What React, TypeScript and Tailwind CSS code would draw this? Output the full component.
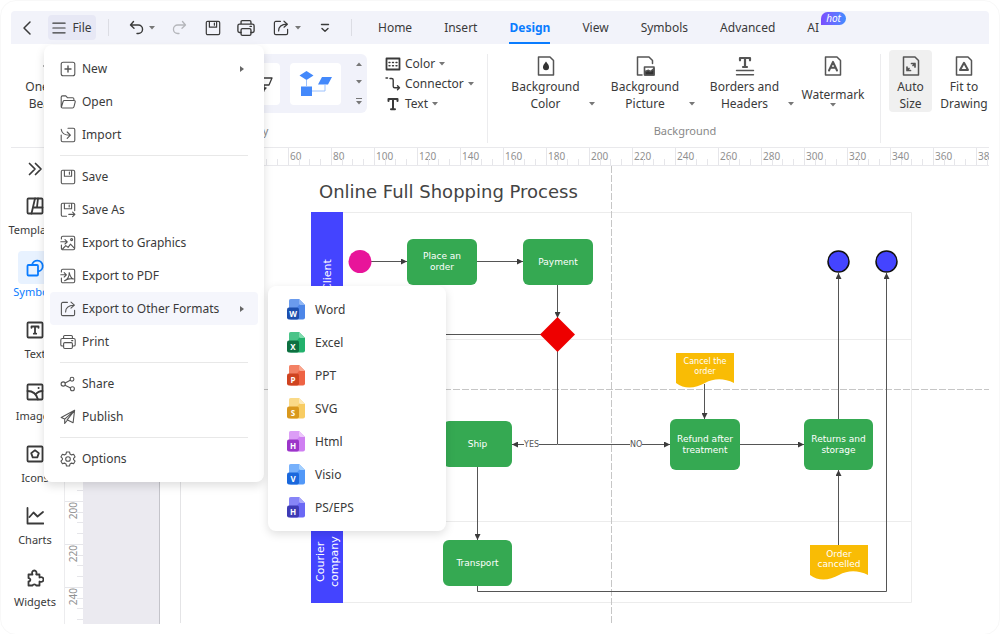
import React from "react";
import clsx from "clsx";

type IconProps = { children: React.ReactNode; className?: string; box?: number; stroke?: number };

const Icon: React.FC<IconProps> = ({ children, className = "size-4", box = 16, stroke = 1.1 }) => (
  <svg
    viewBox={`0 0 ${box} ${box}`}
    className={clsx("shrink-0", className)}
    fill="none"
    stroke="currentColor"
    strokeWidth={stroke}
    strokeLinecap="round"
    strokeLinejoin="round"
    aria-hidden="true"
  >
    {children}
  </svg>
);

const Caret: React.FC<{ className?: string }> = ({ className }) => (
  <svg viewBox="0 0 6 4" className={clsx("h-1 w-1.5 shrink-0 fill-[#777]", className)} aria-hidden="true">
    <path d="M0 0h6L3 3.6z" />
  </svg>
);

const shapes = {
  plus: (
    <>
      <rect x="1.2" y="1.2" width="13.6" height="13.6" rx="2" />
      <path d="M8 5v6M5 8h6" strokeWidth="1.4" />
    </>
  ),
  folder: (
    <path d="M1.2 12.8V3.2c0-.8.5-1.3 1.3-1.3h3.3l1.6 1.8h5.2c.8 0 1.3.5 1.3 1.3v1.4M1.4 13.2l1.7-5.7c.2-.7.6-1 1.3-1h9.7c.8 0 1.3.6 1.1 1.4l-1.2 4.8c-.2.8-.7 1.3-1.5 1.3h-10c-.8 0-1.3-.6-1.1-.8z" />
  ),
  importing: (
    <>
      <path d="M8 1.2h5.3c.9 0 1.5.6 1.5 1.5v10.6c0 .9-.6 1.5-1.5 1.5H2.7c-.9 0-1.5-.6-1.5-1.5V8" />
      <path d="M1.2 2.2c.5 3.8 2.6 6 8.6 6M7.2 5l3.2 3.2-3.2 3.2" />
    </>
  ),
  save: (
    <>
      <path d="M1.3 2.7c0-.8.6-1.4 1.4-1.4h10.6c.8 0 1.4.6 1.4 1.4v10.6c0 .8-.6 1.4-1.4 1.4H2.7c-.8 0-1.4-.6-1.4-1.4z" />
      <path d="M4.4 1.5v5.7h7.2V1.5M9.4 3v2.2" />
    </>
  ),
  saveAs: (
    <>
      <path d="M6.5 14.2H2.7c-.8 0-1.4-.6-1.4-1.4V2.6c0-.8.6-1.4 1.4-1.4h10.6c.8 0 1.4.6 1.4 1.4v6" />
      <path d="M4.4 1.5v5.3h7.2V1.5M9.2 3v2M8.8 12.4h6M12.6 10.2l2.3 2.2-2.3 2.3" />
    </>
  ),
  graphics: (
    <>
      <path d="M1.4 4V2.7c0-.8.6-1.4 1.4-1.4h10.5c.8 0 1.4.6 1.4 1.4v10.6c0 .8-.6 1.4-1.4 1.4H2.8c-.8 0-1.4-.6-1.4-1.4V10" />
      <path d="M.8 6.8h6.4M5 4.6l2.3 2.2L5 9M2.6 14l3.2-3.4 2.3 1.8 2.4-3.2 4 4.2" />
      <circle cx="11.6" cy="4.6" r="1" />
    </>
  ),
  pdf: (
    <>
      <path d="M1.4 4V2.7c0-.8.6-1.4 1.4-1.4h10.5c.8 0 1.4.6 1.4 1.4v10.6c0 .8-.6 1.4-1.4 1.4H2.8c-.8 0-1.4-.6-1.4-1.4V10" />
      <path d="M.8 6.8h5.4M4.2 4.6l2.2 2.2L4.2 9M4.6 12.8C8 11 9.4 7.8 9.2 4.6c1 4 2.4 6 4.4 6.4-2.6-.7-6-.2-9 1.8z" />
    </>
  ),
  share: (
    <>
      <path d="M7.4 1.4H2.8c-.8 0-1.4.6-1.4 1.4v10.4c0 .8.6 1.4 1.4 1.4h10.4c.8 0 1.4-.6 1.4-1.4V9.4" />
      <path d="M5.6 11c0-4 2.6-6.6 8.4-6.8M11 1.2l3.4 3-3.4 3" />
    </>
  ),
  printer: (
    <>
      <path d="M3.6 4.4V2.6c0-.7.4-1.1 1.1-1.1h6.6c.7 0 1.1.4 1.1 1.1v1.8M3.6 12H2.2C1.4 12 .8 11.5.8 10.7V6c0-.9.6-1.5 1.5-1.5h11.4c.9 0 1.5.6 1.5 1.5v4.7c0 .8-.6 1.3-1.4 1.3h-1.4" />
      <rect x="3.6" y="8.6" width="8.8" height="5.9" rx="1.2" />
      <path d="M11.6 6.6h1.2" />
    </>
  ),
  nodes: (
    <>
      <circle cx="3.2" cy="8" r="2.1" />
      <circle cx="12" cy="3.2" r="1.9" />
      <circle cx="12.4" cy="12.8" r="2" />
      <path d="M5.2 7l5-2.8M5 9.2l5.6 2.8" />
    </>
  ),
  plane: <path d="M14.6 1.3L1.2 8.4l3.5 1.7zM14.6 1.3L4.7 10.1v4.3l2.4-2.9M14.6 1.3l-1.5 12.4-6-2.9z" />,
  gear: (
    <>
      <path d="M6.5 1h3l.5 2 1.6.9 2-.6 1.5 2.6-1.5 1.4v1.4l1.5 1.4-1.5 2.6-2-.6-1.6.9-.5 2h-3l-.5-2-1.6-.9-2 .6L.9 10.1l1.5-1.4V7.3L.9 5.9l1.5-2.6 2 .6L6 3z" />
      <circle cx="8" cy="8" r="2.3" />
    </>
  ),
};

type MenuEntry = { label: string; icon: keyof typeof shapes; arrow?: boolean; active?: boolean };

const menuGroups: MenuEntry[][] = [
  [
    { label: "New", icon: "plus", arrow: true },
    { label: "Open", icon: "folder" },
    { label: "Import", icon: "importing" },
  ],
  [
    { label: "Save", icon: "save" },
    { label: "Save As", icon: "saveAs" },
    { label: "Export to Graphics", icon: "graphics" },
    { label: "Export to PDF", icon: "pdf" },
    { label: "Export to Other Formats", icon: "share", arrow: true, active: true },
    { label: "Print", icon: "printer" },
  ],
  [
    { label: "Share", icon: "nodes" },
    { label: "Publish", icon: "plane" },
  ],
  [{ label: "Options", icon: "gear" }],
];

const formats = [
  { label: "Word", letter: "W", page: "#4d86e8", fold: "#8fb6f5", badge: "#1c4fae" },
  { label: "Excel", letter: "X", page: "#22b16c", fold: "#7fdcae", badge: "#0d7040" },
  { label: "PPT", letter: "P", page: "#ee6344", fold: "#f9a68e", badge: "#cf4320" },
  { label: "SVG", letter: "S", page: "#f8cc62", fold: "#fdeab8", badge: "#d9981d" },
  { label: "Html", letter: "H", page: "#cf7ff2", fold: "#ecc6fb", badge: "#9c35c9" },
  { label: "Visio", letter: "V", page: "#5298f8", fold: "#a3d0ff", badge: "#1a68dc" },
  { label: "PS/EPS", letter: "H", page: "#6b68f5", fold: "#aaa8fa", badge: "#3e3bb5" },
];

const FormatIcon: React.FC<(typeof formats)[number]> = ({ letter, page, fold, badge }) => (
  <svg viewBox="0 0 18 21" className="h-[21px] w-[18px] shrink-0" aria-hidden="true">
    <path d="M4 0h8l6 6v12.500a2 2 0 0 1-2 2H4a2 2 0 0 1-2-2V2a2 2 0 0 1 2-2z" fill={page} />
    <path d="M4 0h8v6l-4 5H2V2a2 2 0 0 1 2-2z" fill={fold} opacity="0.45" />
    <path d="M12 0l6 6h-4.500A1.500 1.500 0 0 1 12 4.500z" fill={fold} />
    <rect y="8.5" width="12" height="12" rx="2" fill={badge} />
    <text x="6" y="17.5" textAnchor="middle" fontSize="8" fontWeight="700" fill="#fff" className="font-['Noto_Sans',sans-serif]">
      {letter}
    </text>
  </svg>
);

const FormatMenu: React.FC = () => (
  <div
    role="menu"
    className="absolute -top-1.5 left-full ml-2.5 w-[178px] rounded-lg bg-white py-[7px] shadow-[0_3px_10px_rgba(0,0,0,0.13)]"
  >
    {formats.map((format) => (
      <button key={format.label} role="menuitem" className="flex h-[33px] w-full items-center gap-2.5 px-[19px] text-left">
        <FormatIcon {...format} />
        {format.label}
      </button>
    ))}
  </div>
);

const FileMenu: React.FC = () => (
  <div
    role="menu"
    className="absolute top-[34px] left-[33px] z-20 w-[220px] rounded-lg bg-white px-1.5 py-[7px] text-[12px] shadow-[0_4px_10px_rgba(0,0,0,0.13)]"
  >
    {menuGroups.map((group, index) => (
      <React.Fragment key={group[0].label}>
        {index > 0 && <hr className="mx-2.5 my-1 border-[#e8e8e8]" />}
        {group.map((item) => (
          <div key={item.label} className="relative">
            <button
              role="menuitem"
              className={clsx(
                "flex h-[33px] w-full items-center gap-1.5 rounded px-2.5 text-left",
                item.active && "bg-[#f5f6fc]"
              )}
            >
              <Icon className="size-4 text-[#555]">{shapes[item.icon]}</Icon>
              <span className="flex-1">{item.label}</span>
              {item.arrow && (
                <svg viewBox="0 0 4 6" className="mr-1 h-1.5 w-1 fill-[#666]" aria-hidden="true">
                  <path d="M0 0l4 3-4 3z" />
                </svg>
              )}
            </button>
            {item.active && <FormatMenu />}
          </div>
        ))}
      </React.Fragment>
    ))}
  </div>
);

const tabs = ["Home", "Insert", "Design", "View", "Symbols", "Advanced", "AI"];

const TopBar: React.FC = () => (
  <header className="flex h-[33px] items-center rounded-t bg-[#f2f3fa] pl-2 text-[12px]">
    <button aria-label="Back">
      <Icon stroke={1.5}>
        <path d="M11 2L5 8l6 6" />
      </Icon>
    </button>
    <button className="ml-[13px] flex h-[25px] w-12 items-center justify-center gap-1.5 rounded bg-[#e7e8f5]">
      <Icon className="h-4 w-3.5" stroke={1.3}>
        <path d="M1 2.500h14M1 8h14M1 13.500h14" />
      </Icon>
      File
    </button>
    <span className="ml-3 h-[17px] w-px bg-[#dcdde4]" />
    <button aria-label="Undo" className="ml-5">
      <Icon stroke={1.4}>
        <path d="M4.500 1.500L1.500 5l3.500 3.300M1.500 5h7.800a4.200 4.200 0 0 1 0 8.500H8" />
      </Icon>
    </button>
    <Caret className="ml-1" />
    <button aria-label="Redo" className="ml-4 text-[#b5b6bb]">
      <Icon stroke={1.3}>
        <path d="M11.500 1.500l3 3.500-3.500 3.300M14.500 5H6.700a4.200 4.200 0 0 0 0 8.500H8" />
      </Icon>
    </button>
    <button aria-label="Save" className="ml-[18px]">
      <Icon stroke={1.2}>{shapes.save}</Icon>
    </button>
    <button aria-label="Print" className="ml-4">
      <Icon className="size-[18px]" stroke={1.2}>{shapes.printer}</Icon>
    </button>
    <button aria-label="Share" className="ml-[18px]">
      <Icon stroke={1.2}>{shapes.share}</Icon>
    </button>
    <Caret className="ml-1.5" />
    <button aria-label="More" className="ml-4">
      <Icon stroke={1.4}>
        <path d="M4.500 4.500h7M5 8.500l3 2.800 3-2.800" />
      </Icon>
    </button>
    <span className="ml-[18px] h-[17px] w-px bg-[#dcdde4]" />
    <nav className="ml-[26px] flex h-full gap-8">
      {tabs.map((tab) => (
        <a
          key={tab}
          href="#"
          className={clsx(
            "relative flex items-center border-b-2 pt-0.5",
            tab === "Design" ? "border-[#0a7cff] font-bold text-[#0a7cff]" : "border-transparent"
          )}
        >
          {tab}
          {tab === "AI" && (
            <span className="absolute top-px left-full ml-0.5 flex h-[13px] w-[25px] items-center justify-center rounded-full rounded-bl-none bg-linear-to-r from-[#7a4dff] to-[#3f8bff] text-[10px] text-white italic">
              hot
            </span>
          )}
        </a>
      ))}
    </nav>
  </header>
);

const sheet = "M2.500 1h11.500l3.500 3.500V19h-15z";

const ribbonIcons = {
  color: (
    <>
      <path d={sheet} />
      <path d="M10 5.500c2.300 2.900 3 4.200 3 5.700a3 3 0 0 1-6 0c0-1.500.7-2.800 3-5.700z" fill="#333" stroke="none" />
    </>
  ),
  picture: (
    <>
      <path d="M7 19H2.500V1H14l3.500 3.500V7.500" />
      <rect x="9.500" y="11" width="9.500" height="8" strokeWidth="1.600" />
      <path d="M10 19v-3.500l3.500-1.200 2 1.200 3.500-3V19z" fill="#333" />
    </>
  ),
  header: (
    <>
      <path d="M5 4.300V2h10v2.300M10 2.300v8.400M8 11h4" strokeWidth="2.200" />
      <path d="M1.500 14.500h17M1.500 18.800h17" strokeWidth="1.400" />
    </>
  ),
  watermark: (
    <>
      <path d={sheet} />
      <path d="M6 14.500L10 5.800l4 8.700M7.500 11.800h5" strokeWidth="2" />
    </>
  ),
  auto: (
    <>
      <path d={sheet} />
      <path d="M10.500 7.500H14V11M9.500 14.500H6V11M14 7.500l-2 2M6 14.500l2-2" strokeWidth="1.700" />
    </>
  ),
  fit: (
    <>
      <path d={sheet} />
      <path d="M10 6.800l4 7.200H6z" strokeWidth="2" />
    </>
  ),
};

type RibbonButtonProps = { icon: keyof typeof ribbonIcons; lines: string[]; caret?: boolean; className: string };

const RibbonButton: React.FC<RibbonButtonProps> = ({ icon, lines, caret, className }) => (
  <button className={clsx("flex flex-col items-center rounded pt-1.5 leading-[17px]", className)}>
    <Icon className="size-5 text-[#555]" box={20} stroke={1.5}>
      {ribbonIcons[icon]}
    </Icon>
    <span className="mt-0.5 flex w-full items-end justify-center">
      {caret && <span className="w-1.5" />}
      <span className="flex-1">
        {lines.map((line) => (
          <span key={line} className="block whitespace-nowrap">
            {line}
          </span>
        ))}
      </span>
      {caret && <Caret className="mb-1.5" />}
    </span>
  </button>
);

const Ribbon: React.FC = () => (
  <section className="flex h-[104px] overflow-hidden border-b border-[#e9e9ec] pt-1.5 text-[12px]">
    <div className="flex w-[476px] shrink-0 flex-col">
      <div className="flex h-[73px]">
        <button className="flex w-[82px] flex-col items-center pt-1.5 leading-[17px]">
          <Icon className="size-5" box={20} stroke={1.5}>
            <path d="M2 10h16M10 2v16" />
          </Icon>
          <span className="mt-0.5">
            One-Click
            <br />
            Beautify
          </span>
        </button>
        <div className="mt-1 ml-auto flex h-[59px] w-[240px] items-center justify-end gap-2.5 rounded-md bg-[#f1f2fa]">
          <button aria-label="Default style" className="flex h-[42px] w-[51px] items-center justify-end rounded bg-white pr-1.5">
            <Icon className="size-5" box={20} stroke={1.3}>
              <path d="M1 4h17l-3 7H7M10 11v6M8 14h4l-2 2z" />
            </Icon>
          </button>
          <button aria-label="Blue style" className="flex h-[42px] w-[51px] items-center justify-center rounded bg-white">
            <svg viewBox="0 0 34 26" className="h-[26px] w-[34px] fill-[#4489fb]" aria-hidden="true">
              <path d="M7.500 0l7 4.500-7 4.500L.5 4.500zM23 6h10l-4 7.500H19zM2 15.500h11v9.500H2z" />
              <path d="M7.500 9v6.500M13 20h13v-6.500" fill="none" stroke="#9dc2fd" />
            </svg>
          </button>
          <div className="flex h-full w-4 flex-col items-center justify-between py-2">
            <Caret className="rotate-180" />
            <Caret />
            <span className="border-t border-[#777] pt-0.5">
              <Caret />
            </span>
          </div>
        </div>
        <div className="ml-[18px] flex w-[102px] flex-col pt-1">
          <button className="flex h-5 items-center gap-1">
            <Icon stroke={1.8}>
              <rect x="1.500" y="2.500" width="13" height="11" />
              <path d="M4 6.500h8M4 9.800h8" strokeWidth="1.400" strokeDasharray="1 2.500" />
            </Icon>
            Color
            <Caret />
          </button>
          <button className="flex h-5 items-center gap-1">
            <Icon stroke={1.4}>
              <path d="M1 2h1.500M5 2.500h1.700c1 0 1.500.5 1.500 1.500v6.200c0 1 .5 1.500 1.500 1.500H14M12.500 9.700l2 2-2 2" />
            </Icon>
            Connector
            <Caret />
          </button>
          <button className="flex h-5 items-center gap-1">
            <Icon stroke={2}>
              <path d="M3.500 5V3h9v2M8 3v10M6 13.300h4" />
            </Icon>
            Text
            <Caret />
          </button>
        </div>
      </div>
      <span className="pr-1 text-center text-[11px] text-[#888]">Beautify</span>
    </div>
    <div className="my-1 w-px shrink-0 bg-[#ececee]" />
    <div className="flex w-[392px] shrink-0 flex-col pl-2">
      <div className="flex h-[73px]">
        <RibbonButton icon="color" lines={["Background", "Color"]} caret className="w-[99px]" />
        <RibbonButton icon="picture" lines={["Background", "Picture"]} caret className="w-[100px]" />
        <RibbonButton icon="header" lines={["Borders and", "Headers"]} caret className="w-[99px]" />
        <button className="flex w-[78px] flex-col items-center pt-1.5">
          <Icon className="size-5 text-[#555]" box={20} stroke={1.5}>
            {ribbonIcons.watermark}
          </Icon>
          <span className="mt-2.5 leading-[17px]">Watermark</span>
          <Caret />
        </button>
      </div>
      <span className="pr-1.5 text-center text-[11px] text-[#888]">Background</span>
    </div>
    <div className="my-1 w-px shrink-0 bg-[#ececee]" />
    <div className="flex h-[62px] gap-2 pl-2">
      <RibbonButton icon="auto" lines={["Auto", "Size"]} className="w-[43px] bg-[#f0f0f0]" />
      <RibbonButton icon="fit" lines={["Fit to", "Drawing"]} className="w-12" />
    </div>
  </section>
);

const tools = [
  {
    label: "Templates",
    icon: (
      <>
        <rect x="1.500" y="1.500" width="15" height="15" rx="1" />
        <path d="M9 1.500l-3.500 15M12 1.500l-1 8.500M7 10.500h9.500" />
      </>
    ),
  },
  {
    label: "Symbols",
    icon: (
      <>
        <rect x="1.500" y="6" width="10.500" height="10.500" rx="1" />
        <path d="M6 6a5.400 5.400 0 1 1 6.500 6.300" />
      </>
    ),
  },
  {
    label: "Text",
    icon: (
      <>
        <rect x="1.500" y="1.500" width="15" height="15" rx="1" />
        <path d="M5.500 6.800V5.500h7v1.300M9 5.500v7M7.800 12.700h2.400" />
      </>
    ),
  },
  {
    label: "Images",
    icon: (
      <>
        <rect x="1.500" y="1.500" width="15" height="15" rx="1" />
        <path d="M1.500 8c5 0 9 3 10.500 8.500M9.500 11.500c2-2.500 4-3.500 7-3.500M12.500 5h.2" />
      </>
    ),
  },
  {
    label: "Icons",
    icon: (
      <>
        <rect x="1.500" y="1.500" width="15" height="15" rx="1" />
        <path d="M9 5.300l3.800 2.800-1.500 4.300H6.700L5.200 8.100z" />
      </>
    ),
  },
  { label: "Charts", icon: <path d="M1.500 1v15.500h16M3.500 10l4-4.500 4 4L17 5" /> },
  {
    label: "Widgets",
    icon: (
      <path d="M2.500 5.500h4C5.500 3 6.500 1.500 8.300 1.500S11 3 10.200 5.500h3.300v3c2.500-1 4 .2 4 2s-1.500 3-4 2v4h-3.300c-.5-1.600-3.200-1.600-3.700 0h-4v-4.200c2.200.3 2.700-3 0-3.200z" />
    ),
  },
];

const Sidebar: React.FC = () => (
  <aside className="flex w-[53px] shrink-0 flex-col text-[11px]">
    <button aria-label="Expand panel" className="flex h-[41px] items-center pl-4">
      <Icon stroke={1.7}>
        <path d="M2.500 2.500L8 8l-5.500 5.500M8.500 2.500L14 8l-5.500 5.500" />
      </Icon>
    </button>
    {tools.map(({ label, icon }) => (
      <button
        key={label}
        className={clsx("flex h-[62px] w-12 flex-col items-center", label === "Symbols" && "text-[#0a7cff]")}
      >
        <span
          className={clsx(
            "flex h-[33px] w-[34px] shrink-0 items-center justify-center rounded",
            label === "Symbols" && "bg-[#e8f2ff]"
          )}
        >
          <Icon className="size-[18px]" box={18} stroke={1.8}>
            {icon}
          </Icon>
        </span>
        <span className="leading-[15px]">{label}</span>
      </button>
    ))}
  </aside>
);

const columns = Array.from({ length: 22 }, (_, i) => i * 20 - 40);
const rows = Array.from({ length: 10 }, (_, i) => i * 20 + 60);

const TopRuler: React.FC = () => (
  <div className="flex h-[18px] overflow-hidden border-b border-[#e8e8ec] pl-[9px] text-[10px] text-[#909090]">
    {columns.map((value) => (
      <div key={value} className="relative w-[43px] shrink-0 border-l border-[#e6e6ea] pl-px leading-4">
        {value}
        <div className="absolute inset-x-0 bottom-0 grid h-1.5 grid-cols-4 divide-x divide-[#e6e6ea]">
          <i />
          <i />
          <i />
          <i />
        </div>
      </div>
    ))}
  </div>
);

const SideRuler: React.FC = () => (
  <div className="h-[458px] w-[19px] shrink-0 overflow-hidden border-l border-[#ececee] pt-[34px] text-[10px] text-[#909090]">
    {rows.map((value) => (
      <div key={value} className="relative h-[43px] border-t border-[#e6e6ea] pl-px">
        <span className="rotate-180 leading-[14px] [writing-mode:vertical-rl]">{value}</span>
        <div className="absolute inset-y-0 right-0 grid w-1.5 grid-rows-4 divide-y divide-[#e6e6ea]">
          <i />
          <i />
          <i />
          <i />
        </div>
      </div>
    ))}
  </div>
);

const steps = [
  { text: "Place an order", place: "left-[247px] top-[73px] h-[46px] w-[70px] px-2" },
  { text: "Payment", place: "left-[363px] top-[73px] h-[46px] w-[70px]" },
  { text: "Ship", place: "left-[283px] top-[255px] h-[46px] w-[69px]" },
  { text: "Transport", place: "left-[283px] top-[374px] h-[46px] w-[69px]" },
  { text: "Refund after treatment", place: "left-[510px] top-[253px] h-[51px] w-[70px]" },
  { text: "Returns and storage", place: "left-[644px] top-[253px] h-[51px] w-[69px]" },
];

const notes = [
  { lines: ["Cancel the", "order"], place: "left-[516px] top-[187px] text-[8px]" },
  { lines: ["Order", "cancelled"], place: "left-[650px] top-[379px] text-[9px]" },
];

const Diagram: React.FC = () => (
  <div className="relative flex-1 overflow-hidden font-['DejaVu_Sans',sans-serif]">
    <svg className="absolute inset-0 h-full w-full" fill="none" aria-hidden="true">
      <defs>
        <marker id="arrow" markerWidth="6" markerHeight="6" refX="6" refY="3" orient="auto" markerUnits="userSpaceOnUse">
          <path d="M0 0l6 3-6 3z" fill="#3c3c3c" />
        </marker>
      </defs>
      <path d="M20.500 0v457" stroke="#e4e4e6" />
      <path d="M151.500 46.500h600v390h-600zM183 173.500h568M183 355.500h568" stroke="#ececec" />
      <path d="M451.500 0v457" stroke="#c6c6c6" strokeDasharray="7 2" />
      <line x1="104" y1="223.500" x2="100%" y2="223.500" stroke="#c6c6c6" strokeDasharray="7 2" />
      <path d="M151 46h32v391h-32z" fill="#4444ff" />
      <g stroke="#555">
        <path d="M211 95.500h36" markerEnd="url(#arrow)" />
        <path d="M317 95.500h46" markerEnd="url(#arrow)" />
        <path d="M397.500 119v33" markerEnd="url(#arrow)" />
        <path d="M382 168.500H230M397.500 185v93" />
        <path d="M397.500 278.500H352" markerEnd="url(#arrow)" />
        <path d="M397.500 278.500H510" markerEnd="url(#arrow)" />
        <path d="M317.500 301v73" markerEnd="url(#arrow)" />
        <path d="M317.500 420v5.500h409V107" markerEnd="url(#arrow)" />
        <path d="M678.500 253V107" markerEnd="url(#arrow)" />
        <path d="M580 278.500h64" markerEnd="url(#arrow)" />
        <path d="M544.500 218v35" markerEnd="url(#arrow)" />
        <path d="M678.500 379v-75" markerEnd="url(#arrow)" />
      </g>
      <circle cx="200" cy="95.500" r="11.500" fill="#e8149a" />
      <circle cx="678.500" cy="95.500" r="10.500" fill="#4444ff" stroke="#111" strokeWidth="1.500" />
      <circle cx="726.500" cy="95.500" r="10.500" fill="#4444ff" stroke="#111" strokeWidth="1.500" />
      <path d="M397.500 151l17.500 17.500-17.500 17.500-17.500-17.500z" fill="#ee0000" />
      <path d="M516 187h58v30c-10-5-20-5-29 0s-20 7-29 0z" fill="#f9bc05" />
      <path d="M650 379h58v30c-10-5-20-5-29 0s-20 7-29 0z" fill="#f9bc05" />
    </svg>

    <h1 className="absolute top-3 left-[159px] text-[18px] whitespace-nowrap text-[#444]">
      Online Full Shopping Process
    </h1>

    <div className="absolute top-[46px] left-[152px] grid h-[391px] w-8 grid-rows-[127px_182px_82px] text-center text-[11px] leading-[14px] text-white">
      <span className="flex rotate-180 items-center justify-center [writing-mode:vertical-rl]">Client</span>
      <span />
      <span className="flex rotate-180 items-center justify-center [writing-mode:vertical-rl]">Courier company</span>
    </div>

    {steps.map(({ text, place }) => (
      <div
        key={text}
        className={clsx(
          "absolute flex items-center justify-center rounded-md bg-[#35a952] text-center text-[9px] leading-[11px] text-white",
          place
        )}
      >
        {text}
      </div>
    ))}

    {notes.map(({ lines, place }) => (
      <div key={lines[0]} className={clsx("absolute w-[58px] pt-1 text-center leading-[10px] text-white", place)}>
        {lines.map((line) => (
          <div key={line}>{line}</div>
        ))}
      </div>
    ))}

    <span className="absolute top-[273px] left-[364px] bg-white text-[8px] leading-[11px] text-[#555]">YES</span>
    <span className="absolute top-[273px] left-[470px] bg-white text-[8px] leading-[11px] text-[#555]">NO</span>
  </div>
);

export default function App() {
  return (
    <div className="min-h-screen rounded-2xl border border-[#f8f8f8] bg-white p-2.5 font-['Noto_Sans',sans-serif] text-[#3a3a3a]">
      <div className="relative">
        <TopBar />
        <FileMenu />
        <Ribbon />
        <div className="flex">
          <Sidebar />
          <main className="min-w-0 flex-1">
            <TopRuler />
            <div className="flex">
              <SideRuler />
              <div className="w-[77px] shrink-0 border-r border-[#c4c4ca] bg-[#ebeaf0]" />
              <Diagram />
            </div>
          </main>
        </div>
      </div>
    </div>
  );
}
